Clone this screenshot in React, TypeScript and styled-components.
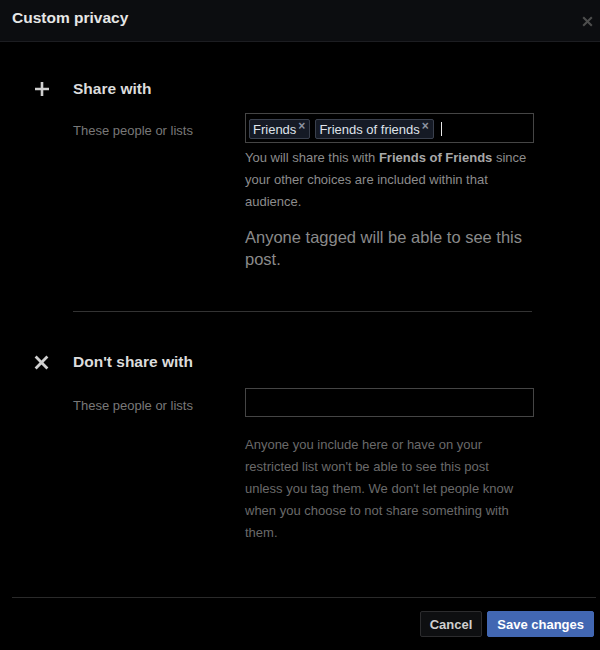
import React from "react";
import styled, { createGlobalStyle } from "styled-components";

const GlobalStyle = createGlobalStyle`
  html, body {
    margin: 0;
    padding: 0;
    background: #000;
  }
  body {
    font-family: "Liberation Sans", Arial, sans-serif;
  }
`;

const Dialog = styled.div`
  display: flex;
  flex-direction: column;
  width: 600px;
  height: 650px;
  background: #000;
  overflow: hidden;
`;

const Header = styled.div`
  display: flex;
  align-items: center;
  justify-content: space-between;
  height: 41px;
  padding: 0 7px 0 12px;
  background: #0c0d10;
  border-bottom: 1px solid #1c1d21;
`;

const Title = styled.h1`
  margin: 0;
  font-size: 15.5px;
  font-weight: bold;
  color: #e6e6e6;
  line-height: 18px;
  padding-bottom: 5px;
`;

const CloseButton = styled.div`
  display: flex;
  align-items: center;
  justify-content: center;
  width: 11px;
  height: 11px;
  margin-top: 2px;
  cursor: pointer;
`;

const Body = styled.div`
  flex: 1;
  display: flex;
  flex-direction: column;
`;

const Section = styled.div<{ $top: number }>`
  display: flex;
  flex-direction: column;
  padding: ${({ $top }) => $top}px 0 0 34px;
`;

const SectionHeading = styled.div`
  display: flex;
  align-items: center;
  height: 20px;
`;

const IconBox = styled.div`
  display: flex;
  align-items: center;
  width: 39px;
  height: 20px;
`;

const SectionTitle = styled.h2`
  margin: 0;
  font-size: 15.5px;
  font-weight: bold;
  color: #dcdcdc;
  line-height: 20px;
`;

const Row = styled.div<{ $top: number }>`
  display: grid;
  grid-template-columns: 172px 289px;
  margin: ${({ $top }) => $top}px 0 0 39px;
`;

const FieldLabel = styled.div`
  font-size: 13px;
  line-height: 16px;
  color: #787878;
  padding-top: 10px;
`;

const FieldColumn = styled.div`
  display: flex;
  flex-direction: column;
`;

const TokenInput = styled.div<{ $height: number }>`
  display: flex;
  align-items: center;
  gap: 5px;
  box-sizing: border-box;
  height: ${({ $height }) => $height}px;
  padding: 2px 3px 0;
  border: 1px solid #454545;
  background: #000;
`;

const Token = styled.span`
  display: inline-flex;
  align-items: flex-start;
  gap: 2px;
  height: 20px;
  box-sizing: border-box;
  padding: 0 4px 0 3px;
  border: 1px solid #3a404d;
  border-radius: 2px;
  background: #151a25;
  color: #dfe3ea;
  font-size: 13px;
  line-height: 19px;
`;

const TokenRemove = styled.span`
  font-size: 12px;
  line-height: 10px;
  font-weight: bold;
  color: #8d93a0;
  padding-top: 1px;
`;

const Caret = styled.span`
  display: inline-block;
  width: 1px;
  height: 14px;
  margin-left: 2px;
  background: #e8e8e8;
`;

const HelpText = styled.p<{ $top: number; $color: string; $width: number }>`
  margin: ${({ $top }) => $top}px 0 0;
  font-size: 13px;
  line-height: 22px;
  color: ${({ $color }) => $color};
  width: ${({ $width }) => $width}px;

  strong {
    color: #a8a8a8;
  }
`;

const Notice = styled.p`
  margin: 13px 0 0;
  font-size: 16.5px;
  line-height: 22px;
  color: #8a8a8a;
`;

const Divider = styled.hr`
  margin: 41px 0 0 73px;
  width: 459px;
  border: none;
  border-top: 1px solid #333;
  height: 0;
`;

const Footer = styled.div`
  display: flex;
  justify-content: flex-end;
  gap: 5px;
  margin: 0 4px 0 12px;
  padding: 13px 2px 13px;
  border-top: 1px solid #2a2a2a;
`;

const Button = styled.button<{ $primary?: boolean }>`
  height: 26px;
  box-sizing: border-box;
  padding: 0 ${({ $primary }) => ($primary ? "9px" : "9px")};
  border-radius: 2px;
  border: 1px solid ${({ $primary }) => ($primary ? "#4267b2" : "#2c2c2e")};
  background: ${({ $primary }) => ($primary ? "#4267b2" : "#0e0f11")};
  color: ${({ $primary }) => ($primary ? "#ffffff" : "#cfcfcf")};
  font-family: "Liberation Sans", Arial, sans-serif;
  font-size: 13px;
  font-weight: bold;
  cursor: pointer;
`;

function PlusIcon() {
  return (
    <svg width="16" height="16" viewBox="0 0 16 16">
      <path d="M8 1v14M1 8h14" stroke="#cfcfcf" strokeWidth="2.6" />
    </svg>
  );
}

function CrossIcon({ size, color, width }: { size: number; color: string; width: number }) {
  return (
    <svg width={size} height={size} viewBox="0 0 14 14">
      <path d="M1.5 1.5l11 11M12.5 1.5l-11 11" stroke={color} strokeWidth={width} />
    </svg>
  );
}

export default function App() {
  return (
    <>
      <GlobalStyle />
      <Dialog>
        <Header>
          <Title>Custom privacy</Title>
          <CloseButton>
            <CrossIcon size={11} color="#4d4d4d" width={2.6} />
          </CloseButton>
        </Header>
        <Body>
          <Section $top={37}>
            <SectionHeading>
              <IconBox>
                <PlusIcon />
              </IconBox>
              <SectionTitle>Share with</SectionTitle>
            </SectionHeading>
            <Row $top={14}>
              <FieldLabel>These people or lists</FieldLabel>
              <FieldColumn>
                <TokenInput $height={30}>
                  <Token>
                    Friends <TokenRemove>×</TokenRemove>
                  </Token>
                  <Token>
                    Friends of friends <TokenRemove>×</TokenRemove>
                  </Token>
                  <Caret />
                </TokenInput>
                <HelpText $top={4} $color="#8c8c8c" $width={289}>
                  You will share this with <strong>Friends of Friends</strong> since your other
                  choices are included within that audience.
                </HelpText>
                <Notice>Anyone tagged will be able to see this post.</Notice>
              </FieldColumn>
            </Row>
          </Section>
          <Divider />
          <Section $top={40}>
            <SectionHeading>
              <IconBox>
                <CrossIcon size={15} color="#cfcfcf" width={2.6} />
              </IconBox>
              <SectionTitle>Don't share with</SectionTitle>
            </SectionHeading>
            <Row $top={16}>
              <FieldLabel>These people or lists</FieldLabel>
              <FieldColumn>
                <TokenInput $height={29} />
                <HelpText $top={17} $color="#6a6a6a" $width={272}>
                  Anyone you include here or have on your restricted list won't be able to see
                  this post unless you tag them. We don't let people know when you choose to not
                  share something with them.
                </HelpText>
              </FieldColumn>
            </Row>
          </Section>
        </Body>
        <Footer>
          <Button>Cancel</Button>
          <Button $primary>Save changes</Button>
        </Footer>
      </Dialog>
    </>
  );
}
